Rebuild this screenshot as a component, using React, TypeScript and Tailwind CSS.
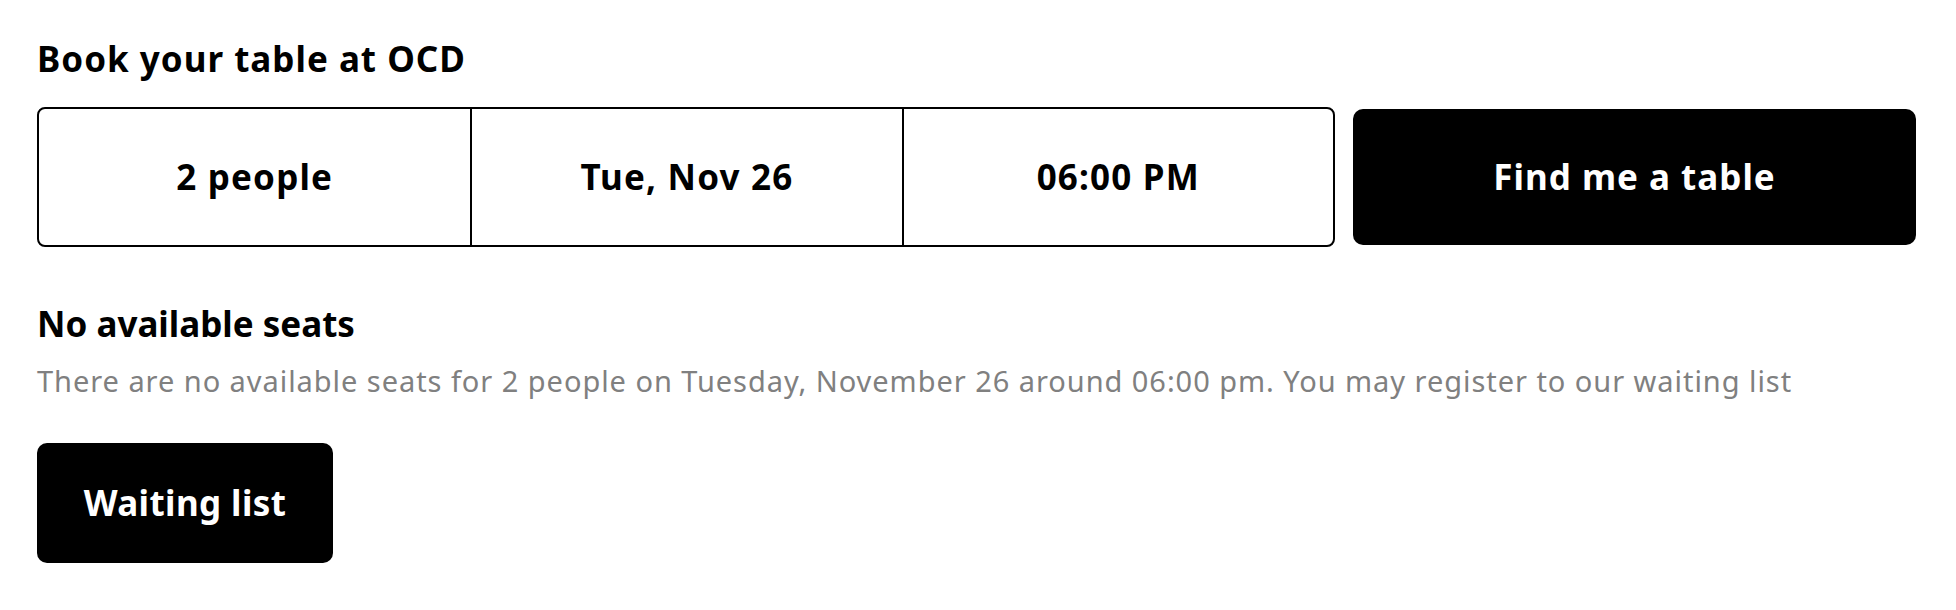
import React from 'react';

const font = { fontFamily: '"Noto Sans", Inter, sans-serif' };

export default function App() {
  const fields = ['2 people', 'Tue, Nov 26', '06:00 PM'];

  return (
    <div className="min-h-[610px] bg-white text-black pl-[37px] pr-[40px] pt-[36px]" style={font}>
      <h1 className="text-[35px] leading-[46px] font-bold tracking-[1px]">Book your table at OCD</h1>

      <div className="mt-[25px] flex items-center gap-[18px]">
        <div className="flex-1 grid grid-cols-3 h-[140px] border-2 border-black rounded-[8px]">
          {fields.map((f, i) => (
            <button
              key={f}
              className={`flex items-center justify-center text-[35px] font-bold tracking-[1.2px] ${i > 0 ? 'border-l-2 border-black' : ''}`}
            >
              {f}
            </button>
          ))}
        </div>
        <button className="w-[563px] h-[136px] bg-black text-white rounded-[10px] text-[35px] font-bold tracking-[1px]">
          Find me a table
        </button>
      </div>

      <h2 className="mt-[54px] text-[35px] leading-[46px] font-bold">No available seats</h2>
      <p className="mt-[14px] text-[29px] leading-[40px] text-[#808080] tracking-[0.95px]">
        There are no available seats for 2 people on Tuesday, November 26 around 06:00 pm. You may register to our waiting list
      </p>

      <button className="mt-[42px] w-[296px] h-[120px] bg-black text-white rounded-[10px] text-[35px] font-bold tracking-[0.4px]">
        Waiting list
      </button>
    </div>
  );
}
